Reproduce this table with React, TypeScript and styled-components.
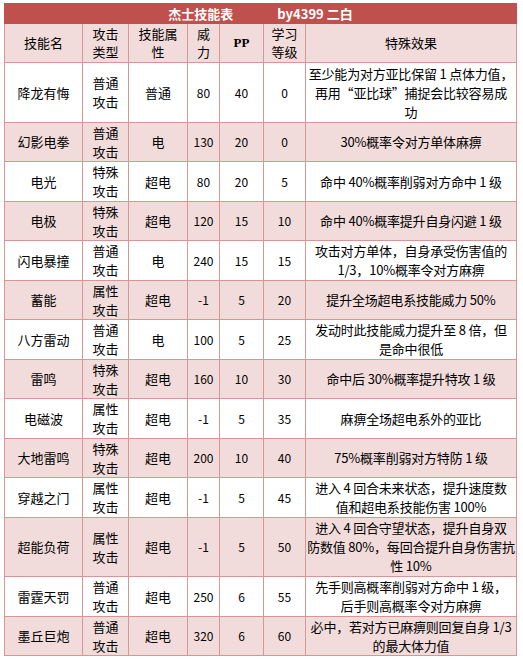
import React from "react";
import styled, { createGlobalStyle } from "styled-components";

const Global = createGlobalStyle`
  html, body { margin: 0; padding: 0; background: #ffffff; }
  body { font-family: "Noto Sans CJK SC", "Noto Sans", sans-serif; }
`;

const Page = styled.div`
  padding: 3px 0 0 4px;
`;

const Table = styled.table`
  border-collapse: collapse;
  table-layout: fixed;
  width: 512px;
  font-family: "Noto Sans CJK SC", "Noto Sans", sans-serif;
  font-size: 13px;
  color: #000;
`;

const TitleRow = styled.tr`
  height: 20px;
`;

const TitleCell = styled.th`
  background: #c0504d;
  color: #ffffff;
  font-weight: bold;
  font-size: 13px;
  padding: 0;
  line-height: 17px;
  border: 1px solid #c0504d;
  text-align: center;
  white-space: nowrap;
`;

const Credit = styled.span`
  margin-left: 44px;
`;

const Row = styled.tr<{ $pink: boolean; $lines: number }>`
  background: ${(p) => (p.$pink ? "#f2dcdb" : "#ffffff")};
  height: ${(p) => (p.$lines === 3 ? 59.5 : p.$lines === 0 ? 39 : 39.5)}px;
`;

const HeadCell = styled.th<{ $serif?: boolean }>`
  border: 1px solid #d99694;
  padding: 0;
  line-height: 18px;
  text-align: center;
  vertical-align: middle;
  white-space: nowrap;
  font-weight: ${(p) => (p.$serif ? "bold" : "normal")};
  font-family: ${(p) =>
    p.$serif
      ? '"Liberation Serif", "Times New Roman", serif'
      : '"Noto Sans CJK SC", "Noto Sans", sans-serif'};
`;

const Cell = styled.td`
  border: 1px solid #d99694;
  padding: 0;
  line-height: 19px;
  text-align: center;
  vertical-align: middle;
  white-space: nowrap;
  overflow: hidden;
`;

const Num = styled(Cell)`
  font-size: 12px;
`;

const Effect = styled(Cell)`
  letter-spacing: -0.2px;
`;

type Skill = {
  name: string;
  type: string;
  attr: string;
  power: string;
  pp: string;
  level: string;
  effect: string[];
};

const skills: Skill[] = [
  { name: "降龙有悔", type: "普通攻击", attr: "普通", power: "80", pp: "40", level: "0", effect: ["至少能为对方亚比保留 1 点体力值，", "再用“亚比球”捕捉会比较容易成", "功"] },
  { name: "幻影电拳", type: "普通攻击", attr: "电", power: "130", pp: "20", level: "0", effect: ["30%概率令对方单体麻痹"] },
  { name: "电光", type: "特殊攻击", attr: "超电", power: "80", pp: "20", level: "5", effect: ["命中 40%概率削弱对方命中 1 级"] },
  { name: "电极", type: "特殊攻击", attr: "超电", power: "120", pp: "15", level: "10", effect: ["命中 40%概率提升自身闪避 1 级"] },
  { name: "闪电暴撞", type: "普通攻击", attr: "电", power: "240", pp: "15", level: "15", effect: ["攻击对方单体，自身承受伤害值的", "1/3，10%概率令对方麻痹"] },
  { name: "蓄能", type: "属性攻击", attr: "超电", power: "-1", pp: "5", level: "20", effect: ["提升全场超电系技能威力 50%"] },
  { name: "八方雷动", type: "普通攻击", attr: "电", power: "100", pp: "5", level: "25", effect: ["发动时此技能威力提升至 8 倍，但", "是命中很低"] },
  { name: "雷鸣", type: "特殊攻击", attr: "超电", power: "160", pp: "10", level: "30", effect: ["命中后 30%概率提升特攻 1 级"] },
  { name: "电磁波", type: "属性攻击", attr: "超电", power: "-1", pp: "5", level: "35", effect: ["麻痹全场超电系外的亚比"] },
  { name: "大地雷鸣", type: "特殊攻击", attr: "超电", power: "200", pp: "10", level: "40", effect: ["75%概率削弱对方特防 1 级"] },
  { name: "穿越之门", type: "属性攻击", attr: "超电", power: "-1", pp: "5", level: "45", effect: ["进入 4 回合未来状态，提升速度数", "值和超电系技能伤害 100%"] },
  { name: "超能负荷", type: "属性攻击", attr: "超电", power: "-1", pp: "5", level: "50", effect: ["进入 4 回合守望状态，提升自身双", "防数值 80%，每回合提升自身伤害抗", "性 10%"] },
  { name: "雷霆天罚", type: "普通攻击", attr: "超电", power: "250", pp: "6", level: "55", effect: ["先手则高概率削弱对方命中 1 级，", "后手则高概率令对方麻痹"] },
  { name: "墨丘巨炮", type: "普通攻击", attr: "超电", power: "320", pp: "6", level: "60", effect: ["必中，若对方已麻痹则回复自身 1/3", "的最大体力值"] },
];

const Lines = ({ lines }: { lines: string[] }) => (
  <>
    {lines.map((l, i) => (
      <React.Fragment key={i}>
        {i > 0 && <br />}
        {l}
      </React.Fragment>
    ))}
  </>
);

export default function App() {
  return (
    <Page>
      <Global />
      <Table>
        <colgroup>
          <col style={{ width: 78 }} />
          <col style={{ width: 46 }} />
          <col style={{ width: 59 }} />
          <col style={{ width: 32 }} />
          <col style={{ width: 44 }} />
          <col style={{ width: 42 }} />
          <col style={{ width: 211 }} />
        </colgroup>
        <thead>
          <TitleRow>
            <TitleCell colSpan={7}>
              <span>杰士技能表</span>
              <Credit>by4399 二白</Credit>
            </TitleCell>
          </TitleRow>
          <Row $pink $lines={0}>
            <HeadCell>技能名</HeadCell>
            <HeadCell>攻击<br />类型</HeadCell>
            <HeadCell>技能属<br />性</HeadCell>
            <HeadCell>威<br />力</HeadCell>
            <HeadCell $serif>PP</HeadCell>
            <HeadCell>学习<br />等级</HeadCell>
            <HeadCell>特殊效果</HeadCell>
          </Row>
        </thead>
        <tbody>
          {skills.map((s, i) => (
            <Row key={s.name} $pink={i % 2 === 1} $lines={Math.max(2, s.effect.length)}>
              <Cell>{s.name}</Cell>
              <Cell>
                {s.type.slice(0, 2)}
                <br />
                {s.type.slice(2)}
              </Cell>
              <Cell>{s.attr}</Cell>
              <Num>{s.power}</Num>
              <Num>{s.pp}</Num>
              <Num>{s.level}</Num>
              <Effect>
                <Lines lines={s.effect} />
              </Effect>
            </Row>
          ))}
        </tbody>
      </Table>
    </Page>
  );
}
